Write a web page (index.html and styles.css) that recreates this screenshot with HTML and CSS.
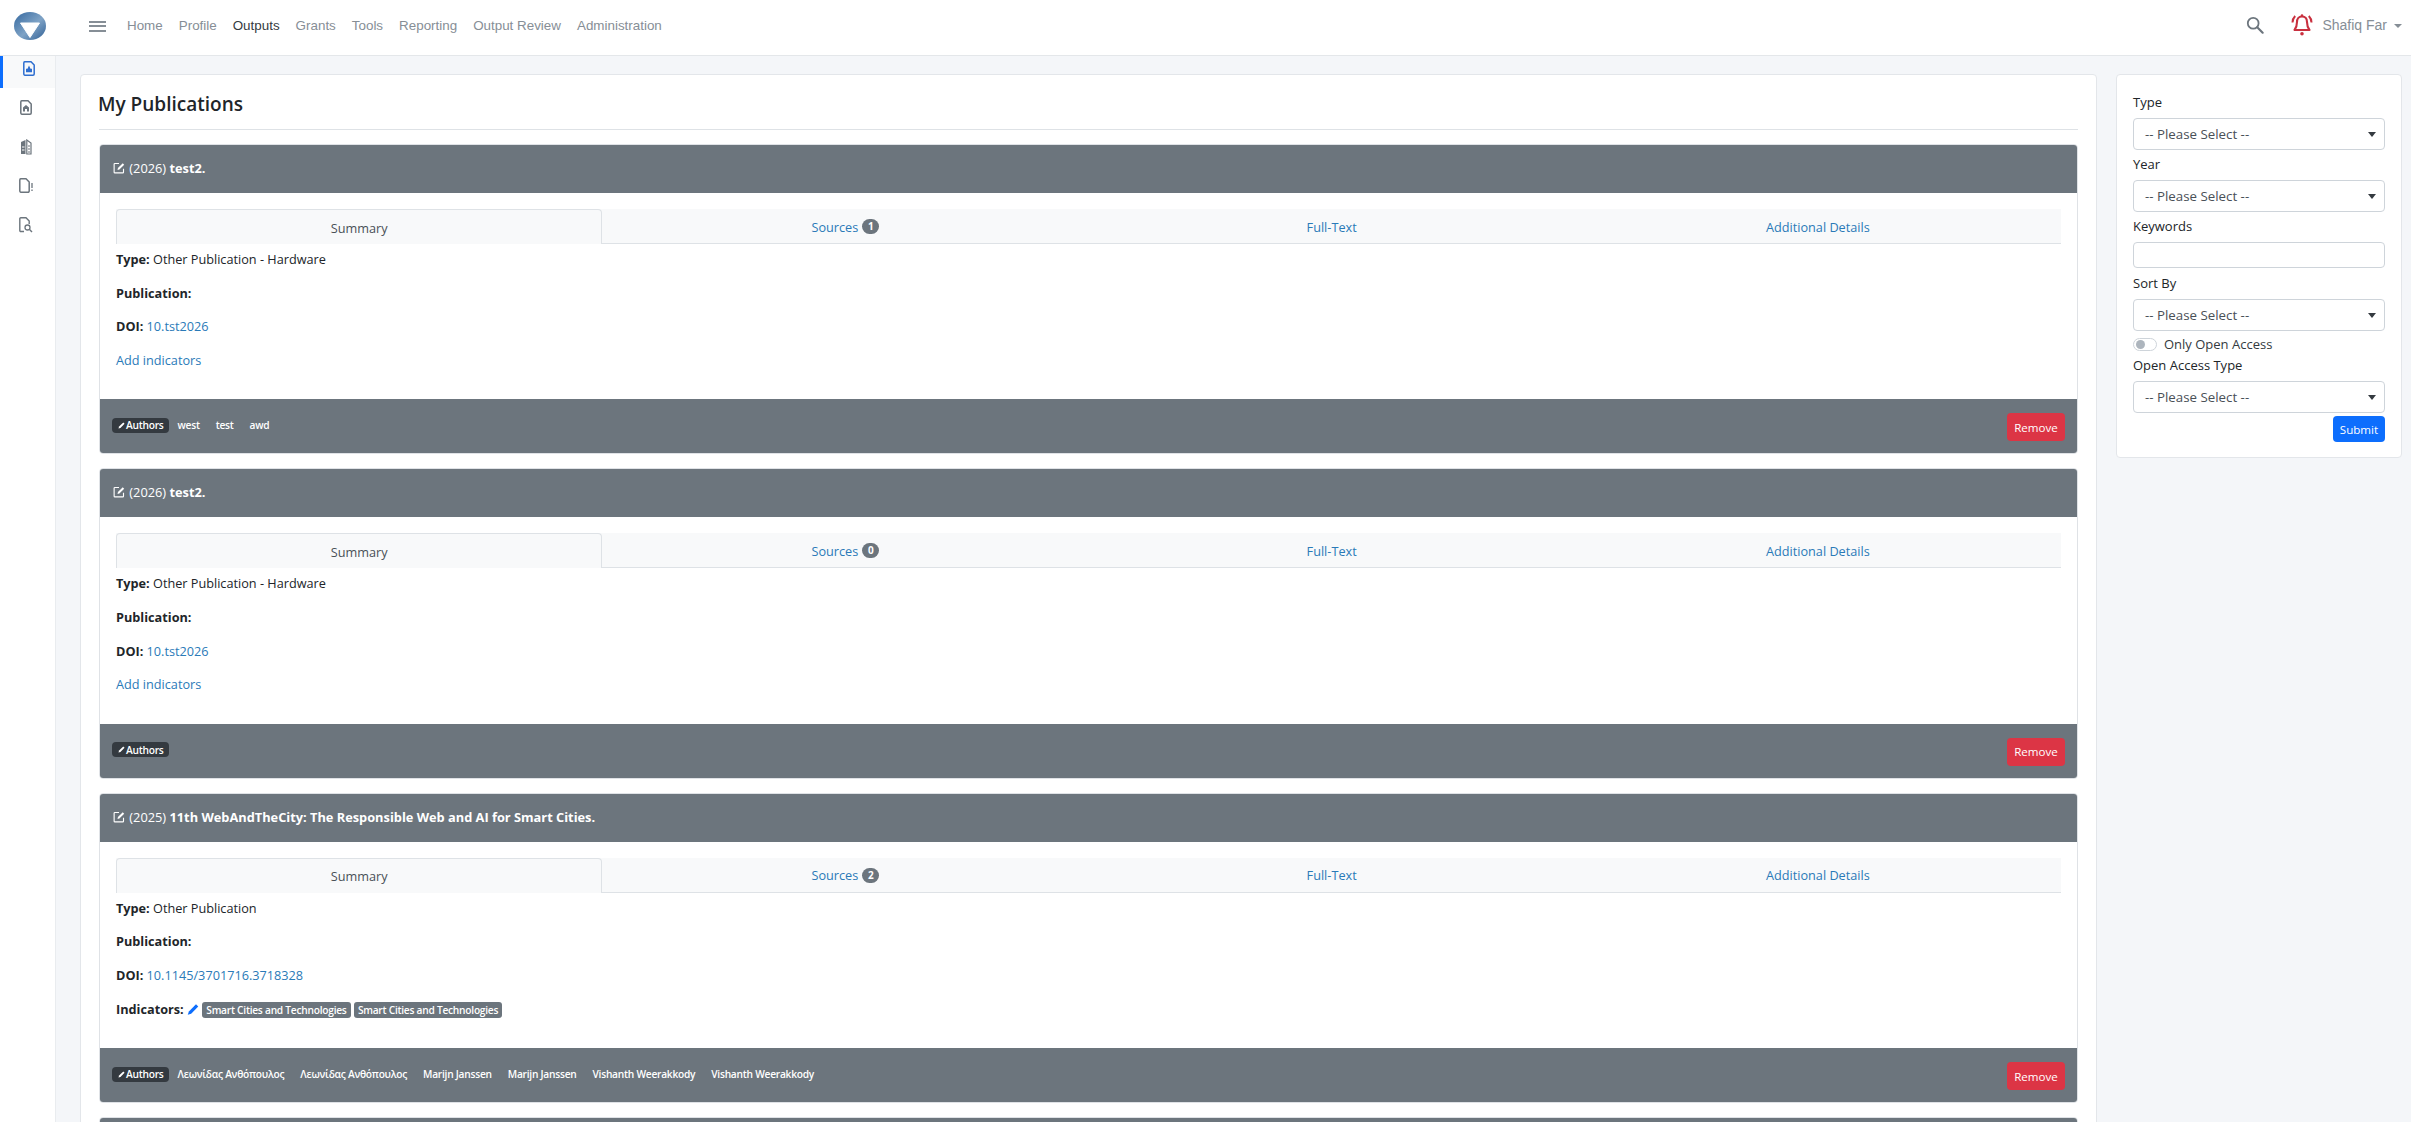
FILE: index.html
```html
<!DOCTYPE html>
<html lang="en">
<head>
<meta charset="utf-8">
<title>My Publications</title>
<link rel="stylesheet" href="styles.css">
</head>
<body>
<svg class="sprite" width="0" height="0" aria-hidden="true">
  <defs>
    <linearGradient id="logoGrad" x1="0" y1="0" x2="1" y2="1">
      <stop offset="0" stop-color="#34689f"/>
      <stop offset="0.55" stop-color="#7fa3c6"/>
      <stop offset="1" stop-color="#2f5f94"/>
    </linearGradient>
    <symbol id="ext" viewBox="0 0 16 16">
      <path d="M14 9v4.500a1 1 0 0 1-1 1H2.500a1 1 0 0 1-1-1V3a1 1 0 0 1 1-1H8" fill="none" stroke="currentColor" stroke-width="1.500"/>
      <path d="M6 10.500l.6-2.500L13 1.600l1.900 1.900L8.500 9.900z" fill="currentColor"/>
    </symbol>
    <symbol id="pen" viewBox="0 0 16 16">
      <path d="M12 1l3 3-9.500 9.500L1 15l1.500-4.500z" fill="currentColor"/>
    </symbol>
  </defs>
</svg>

<header class="topbar">
  <a class="logo" href="#">
    <svg width="32" height="28" viewBox="0 0 32 28"><ellipse cx="16" cy="14" rx="16" ry="14" fill="url(#logoGrad)"/><path d="M6.500 11h19L16 25.500z" fill="#fff" stroke="#fff" stroke-linejoin="round"/></svg>
  </a>
  <button class="burger" aria-label="Menu"><span></span><span></span><span></span></button>
  <nav class="mainnav">
    <a href="#">Home</a><a href="#">Profile</a><a href="#" class="current">Outputs</a><a href="#">Grants</a><a href="#">Tools</a><a href="#">Reporting</a><a href="#">Output Review</a><a href="#">Administration</a>
  </nav>
  <div class="topright">
    <svg class="search" width="18" height="18" viewBox="0 0 20 20"><circle cx="8" cy="8" r="6" fill="none" stroke="#6c757d" stroke-width="2"/><path d="M12.500 12.500L18.500 18.500" stroke="#6c757d" stroke-width="2.400" stroke-linecap="round"/></svg>
    <svg class="bell" width="24" height="22" viewBox="0 0 24 22"><path d="M12 2.500c-3.500 0-5 2.600-5 5.500 0 4-1 6-2.500 8h15c-1.500-2-2.500-4-2.500-8 0-2.900-1.500-5.500-5-5.500z" fill="none" stroke="#c9303f" stroke-width="2.100" stroke-linejoin="round"/><path d="M2.500 8.500c0-2.700.9-4.700 2.700-6.500M21.500 8.500c0-2.700-.9-4.700-2.700-6.500" fill="none" stroke="#c9303f" stroke-width="2"/><circle cx="12" cy="19.700" r="1.800" fill="#c9303f"/><circle cx="12" cy="1.500" r="1.300" fill="#c9303f"/></svg>
    <a href="#" class="user">Shafiq Far<span class="caret"></span></a>
  </div>
</header>

<div class="shell">
  <aside class="sidebar">
    <a class="side-item active" href="#">
      <svg width="12" height="15" viewBox="0 0 12 15"><path d="M1.800.8H8l3.200 3.200v9a1.200 1.200 0 0 1-1.200 1.200H1.800A1.200 1.200 0 0 1 .8 13V2A1.200 1.200 0 0 1 1.800.8z" fill="none" stroke="currentColor" stroke-width="1.500"/><path d="M6 4.500l1.500 3.200H9v3.500H3V7.700h1.500z" fill="currentColor"/></svg>
    </a>
    <a class="side-item" href="#">
      <svg width="12" height="15" viewBox="0 0 12 15"><path d="M1.800.8H8l3.200 3.200v9a1.200 1.200 0 0 1-1.200 1.200H1.800A1.200 1.200 0 0 1 .8 13V2A1.200 1.200 0 0 1 1.800.8z" fill="none" stroke="currentColor" stroke-width="1.500"/><path d="M3 7.500l3-2.500 3 2.500v4H7V9H5v2.500H3z" fill="currentColor"/></svg>
    </a>
    <a class="side-item" href="#">
      <svg width="12" height="16" viewBox="0 0 12 16"><path d="M5.500 1L1 3v12h4.500z" fill="currentColor"/><path d="M6.800 1l4.200 3v11H6.800z" fill="none" stroke="currentColor" stroke-width="1.200"/><path d="M2 8h2.500M2 11h2.500" stroke="#fff" stroke-width="1"/><path d="M8 7h2M8 10h2M8 13h2" stroke="currentColor" stroke-width="1"/></svg>
    </a>
    <a class="side-item" href="#">
      <svg width="15" height="15" viewBox="0 0 15 15"><path d="M1.800.8H7l3.200 3.200v9a1.200 1.200 0 0 1-1.200 1.200H1.800A1.200 1.200 0 0 1 .8 13V2A1.200 1.200 0 0 1 1.800.8z" fill="none" stroke="currentColor" stroke-width="1.500"/><path d="M13 5v5M13 11.500v1.500" stroke="currentColor" stroke-width="1.300"/></svg>
    </a>
    <a class="side-item" href="#">
      <svg width="14" height="16" viewBox="0 0 14 16"><path d="M5 14.500H1.800A1 1 0 0 1 .8 13.500V1.800a1 1 0 0 1 1-1H7L10.200 4v3" fill="none" stroke="currentColor" stroke-width="1.400"/><circle cx="8.500" cy="10.500" r="2.500" fill="none" stroke="currentColor" stroke-width="1.300"/><path d="M10.300 12.300L13 15" stroke="currentColor" stroke-width="1.400"/></svg>
    </a>
  </aside>

  <main class="content">
    <section class="card pubs">
      <h1 class="page-title">My Publications</h1>
      <hr class="rule">

      <article class="pub">
        <div class="pub-head"><svg class="ext"><use href="#ext"/></svg> (2026) <strong>test2.</strong></div>
        <div class="pub-body">
          <div class="tabs">
            <a class="tab on" href="#">Summary</a>
            <a class="tab" href="#">Sources <span class="count">1</span></a>
            <a class="tab" href="#">Full-Text</a>
            <a class="tab" href="#">Additional Details</a>
          </div>
          <p class="row"><b>Type:</b> Other Publication - Hardware</p>
          <p class="row"><b>Publication:</b></p>
          <p class="row"><b>DOI:</b> <a href="#">10.tst2026</a></p>
          <p class="row"><a href="#">Add indicators</a></p>
        </div>
        <div class="pub-foot">
          <div class="authors">
            <span class="auth-tag"><svg class="pen"><use href="#pen"/></svg>Authors</span>
            <a href="#">west</a><a href="#">test</a><a href="#">awd</a>
          </div>
          <button class="btn-remove">Remove</button>
        </div>
      </article>

      <article class="pub">
        <div class="pub-head"><svg class="ext"><use href="#ext"/></svg> (2026) <strong>test2.</strong></div>
        <div class="pub-body">
          <div class="tabs">
            <a class="tab on" href="#">Summary</a>
            <a class="tab" href="#">Sources <span class="count">0</span></a>
            <a class="tab" href="#">Full-Text</a>
            <a class="tab" href="#">Additional Details</a>
          </div>
          <p class="row"><b>Type:</b> Other Publication - Hardware</p>
          <p class="row"><b>Publication:</b></p>
          <p class="row"><b>DOI:</b> <a href="#">10.tst2026</a></p>
          <p class="row"><a href="#">Add indicators</a></p>
        </div>
        <div class="pub-foot">
          <div class="authors">
            <span class="auth-tag"><svg class="pen"><use href="#pen"/></svg>Authors</span>
          </div>
          <button class="btn-remove">Remove</button>
        </div>
      </article>

      <article class="pub">
        <div class="pub-head"><svg class="ext"><use href="#ext"/></svg> (2025) <strong>11th WebAndTheCity: The Responsible Web and AI for Smart Cities.</strong></div>
        <div class="pub-body">
          <div class="tabs">
            <a class="tab on" href="#">Summary</a>
            <a class="tab" href="#">Sources <span class="count">2</span></a>
            <a class="tab" href="#">Full-Text</a>
            <a class="tab" href="#">Additional Details</a>
          </div>
          <p class="row"><b>Type:</b> Other Publication</p>
          <p class="row"><b>Publication:</b></p>
          <p class="row"><b>DOI:</b> <a href="#">10.1145/3701716.3718328</a></p>
          <p class="row"><b>Indicators:</b> <svg class="pen-blue"><use href="#pen"/></svg> <span class="ind">Smart Cities and Technologies</span> <span class="ind">Smart Cities and Technologies</span></p>
        </div>
        <div class="pub-foot">
          <div class="authors">
            <span class="auth-tag"><svg class="pen"><use href="#pen"/></svg>Authors</span>
            <a href="#">Λεωνίδας Ανθόπουλος</a><a href="#">Λεωνίδας Ανθόπουλος</a><a href="#">Marijn Janssen</a><a href="#">Marijn Janssen</a><a href="#">Vishanth Weerakkody</a><a href="#">Vishanth Weerakkody</a>
          </div>
          <button class="btn-remove">Remove</button>
        </div>
      </article>

      <article class="pub">
        <div class="pub-head"></div>
      </article>
    </section>

    <aside class="card filters">
      <form class="filter-form">
        <label class="lbl">Type</label>
        <div class="select">-- Please Select --</div>
        <label class="lbl">Year</label>
        <div class="select">-- Please Select --</div>
        <label class="lbl">Keywords</label>
        <div class="input"></div>
        <label class="lbl">Sort By</label>
        <div class="select">-- Please Select --</div>
        <div class="switch-row"><span class="switch"><span class="knob"></span></span>Only Open Access</div>
        <label class="lbl">Open Access Type</label>
        <div class="select">-- Please Select --</div>
        <div class="submit-row"><button class="btn-submit" type="button">Submit</button></div>
      </form>
    </aside>
  </main>
</div>
</body>
</html>
```

FILE: styles.css
```css
* { box-sizing: border-box; }
html, body { margin: 0; height: 100%; }
body {
  height: 1122px;
  overflow: hidden;
  background: #f4f6f9;
  color: #212529;
  font-family: "Open Sans", "Noto Sans", sans-serif;
  font-size: 13px;
}
a { color: #2a7ab8; text-decoration: none; }
.sprite { display: block; height: 0; }

.topbar {
  height: 56px;
  display: flex;
  align-items: center;
  background: #fff;
  border-bottom: 1px solid #e4e7ea;
  padding-left: 14px;
}
.logo { display: flex; width: 32px; height: 28px; margin-top: -3px; }
.burger {
  display: flex;
  flex-direction: column;
  justify-content: space-between;
  width: 17px;
  height: 11px;
  margin: -3px 0 0 43px;
  padding: 0;
  border: 0;
  background: none;
}
.burger span { display: block; height: 2px; background: #868e96; }
.mainnav {
  display: flex;
  gap: 16px;
  margin: -5px 0 0 21px;
  font-family: "Liberation Sans", Arial, sans-serif;
  font-size: 13.400px;
}
.mainnav a { color: #868e96; }
.mainnav a.current { color: #343a40; }
.topright {
  margin: -5px 0 0 auto;
  display: flex;
  align-items: center;
  padding-right: 9px;
  font-family: "Liberation Sans", Arial, sans-serif;
  font-size: 14px;
}
.search { margin-right: 26px; }
.bell { margin-right: 8px; }
.user { color: #868e96; }
.caret {
  display: inline-block;
  margin-left: 7px;
  vertical-align: 2px;
  border-top: 4px solid #868e96;
  border-left: 4px solid transparent;
  border-right: 4px solid transparent;
}

.shell { display: flex; height: 1066px; }
.sidebar {
  flex: 0 0 56px;
  background: #fff;
  border-right: 1px solid #e9ecef;
}
.side-item {
  display: flex;
  align-items: center;
  justify-content: center;
  height: 39px;
  color: #6c757d;
  padding-right: 3px;
}
.side-item.active {
  height: 32px;
  color: #2f6fd0;
  background: #f8f9fa;
  border-left: 3px solid #0d6efd;
  padding: 0 0 7px 0;
}

.content {
  flex: 1;
  min-width: 0;
  display: grid;
  grid-template-columns: 1fr 286px;
  gap: 19px;
  align-items: start;
  padding: 18px 9px 0 24px;
}
.card {
  background: #fff;
  border: 1px solid #e3e6ea;
  border-radius: 4px;
}
.pubs { padding: 0 18px; min-height: 1100px; }
.page-title {
  margin: 0 0 0 -1px;
  padding: 16px 0 0 0;
  height: 54px;
  font-size: 19px;
  line-height: 27px;
  font-weight: 600;
}
.rule { margin: 0 0 14px; border: 0; border-top: 1px solid #dee2e6; }

.pub {
  margin-bottom: 14px;
  border: 1px solid #dfe2e6;
  border-radius: 4px;
  overflow: hidden;
  font-size: 12.700px;
}
.pub-head {
  height: 48px;
  padding: 0 13px 2px;
  line-height: 46px;
  background: #6c757d;
  color: #fff;
  font-size: 12.800px;
  white-space: normal;
  border-bottom: 1px solid #6c757d;
}
.ext { width: 12px; height: 12px; margin-right: 1px; color: #fff; vertical-align: -1px; }
.pub-body { padding: 16px 16px 16px; }
.tabs {
  display: grid;
  grid-template-columns: repeat(4, 1fr);
  height: 35px;
  background: #f8f9fa;
  border-bottom: 1px solid #dee2e6;
  margin-bottom: 5px;
}
.tab {
  display: flex;
  align-items: center;
  justify-content: center;
  gap: 4px;
  padding-top: 1px;
}
.tab.on {
  color: #495057;
  border: 1px solid #dee2e6;
  border-bottom: 0;
  border-radius: 4px 4px 0 0;
  margin-bottom: -1px;
  background: #f8f9fa;
}
.count {
  display: inline-block;
  min-width: 17px;
  height: 15px;
  padding: 0 4px;
  line-height: 15px;
  text-align: center;
  border-radius: 8px;
  background: #6c757d;
  color: #fff;
  font-size: 10px;
  font-weight: 700;
}
.row {
  margin: 0 0 13.600px;
  line-height: 20px;
  height: 20px;
  white-space: nowrap;
}
.row b { font-weight: 700; }
.pen-blue { width: 12px; height: 13px; color: #0d6efd; vertical-align: -2px; }
.ind {
  display: inline-block;
  height: 16px;
  line-height: 16px;
  padding: 0 4px;
  border-radius: 3px;
  background: #6c757d;
  color: #fff;
  font-size: 10.200px;
  font-weight: 600;
  letter-spacing: -0.250px;
}
.pub-foot {
  height: 54px;
  padding: 14px 12px 0 12px;
  display: flex;
  justify-content: space-between;
  align-items: flex-start;
  background: #6c757d;
}
.authors {
  display: flex;
  align-items: center;
  gap: 16px;
  height: 24px;
  font-size: 10.200px;
  font-weight: 600;
  letter-spacing: -0.250px;
}
.authors a { color: #fff; }
.auth-tag {
  display: inline-flex;
  align-items: center;
  gap: 1px;
  height: 15px;
  margin-right: -7px;
  padding: 0 5px 0 6px;
  border-radius: 4px;
  background: #343a40;
  color: #fff;
}
.pen { width: 7px; height: 7px; color: #fff; }
.btn-remove {
  width: 58px;
  height: 28px;
  padding: 0;
  border: 0;
  border-radius: 4px;
  background: #dc3545;
  color: #fff;
  font-family: inherit;
  font-size: 11.600px;
}

.filters { padding: 18px 16px 15px 16px; }
.filter-form { display: flex; flex-direction: column; }
.lbl { display: block; height: 25px; line-height: 19px; font-size: 13px; }
.select {
  height: 32px;
  margin-bottom: 5px;
  padding-left: 11px;
  line-height: 32px;
  font-size: 13.300px;
  color: #495057;
  background: #fff;
  border: 1px solid #ced4da;
  border-radius: 4px;
  display: flex;
  justify-content: space-between;
  align-items: center;
}
.select::after {
  content: "";
  margin-right: 8px;
  border-top: 5px solid #343a40;
  border-left: 4.500px solid transparent;
  border-right: 4.500px solid transparent;
}
.input {
  height: 26px;
  margin-bottom: 6px;
  background: #fff;
  border: 1px solid #ced4da;
  border-radius: 4px;
}
.switch-row {
  display: flex;
  align-items: center;
  gap: 7px;
  height: 20px;
  margin: -2px 0 2px;
  line-height: 20px;
  color: #343a40;
}
.switch {
  display: block;
  width: 24px;
  height: 13px;
  padding: 1px 2px;
  border: 1px solid #ced4da;
  border-radius: 7px;
  background: #fff;
}
.knob { display: block; width: 9px; height: 9px; border-radius: 50%; background: #adb5bd; }
.submit-row { display: flex; justify-content: flex-end; margin-top: -2px; }
.btn-submit {
  width: 52px;
  height: 26px;
  padding: 0;
  border: 0;
  border-radius: 4px;
  background: #0d6efd;
  color: #fff;
  font-family: inherit;
  font-size: 11.600px;
}
```
